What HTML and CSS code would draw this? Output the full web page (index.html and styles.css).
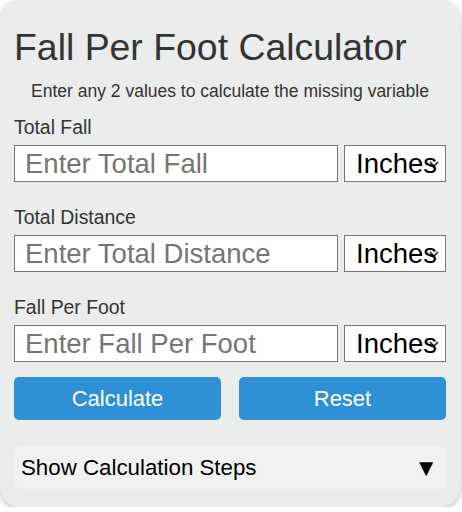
FILE: index.html
```html
<!DOCTYPE html>
<html lang="en">
<head>
    <meta charset="UTF-8">
    <meta name="viewport" content="width=device-width, initial-scale=1.0">
    <title>Fall Per Foot Calculator</title>
    <link rel="stylesheet" href="styles.css">
</head>
<body>

    <div class="calculator">
        <h1>Fall Per Foot Calculator</h1>
        <p class="intro">Enter any 2 values to calculate the missing variable</p>

        <div class="field">
            <label for="totalFall">Total Fall</label>
            <div class="input-row">
                <input type="text" id="totalFall" placeholder="Enter Total Fall">
                <select id="totalFallUnit">
                    <option>Inches</option>
                    <option>Feet</option>
                    <option>Centimeters</option>
                    <option>Meters</option>
                </select>
            </div>
        </div>

        <div class="field">
            <label for="totalDistance">Total Distance</label>
            <div class="input-row">
                <input type="text" id="totalDistance" placeholder="Enter Total Distance">
                <select id="totalDistanceUnit">
                    <option>Inches</option>
                    <option>Feet</option>
                    <option>Centimeters</option>
                    <option>Meters</option>
                </select>
            </div>
        </div>

        <div class="field">
            <label for="fallPerFoot">Fall Per Foot</label>
            <div class="input-row">
                <input type="text" id="fallPerFoot" placeholder="Enter Fall Per Foot">
                <select id="fallPerFootUnit">
                    <option>Inches</option>
                    <option>Centimeters</option>
                </select>
            </div>
        </div>

        <div class="buttons">
            <button type="button">Calculate</button>
            <button type="button">Reset</button>
        </div>

        <details class="steps">
            <summary><span>Show Calculation Steps</span><span class="arrow">&#9660;</span></summary>
            <p>No calculation yet.</p>
        </details>
    </div>

</body>
</html>
```

FILE: styles.css
```css
body {
    margin: 0;
    background-color: #fff;
    font-family: "Liberation Sans", Arial, sans-serif;
    color: #333;
}
.calculator {
    width: 460px;
    box-sizing: border-box;
    padding: 25px 14px 18px;
    background-color: #ebecec;
    border-radius: 20px;
    box-shadow: 0 2px 6px rgba(0, 0, 0, 0.25);
}
h1 {
    margin: 0;
    font-size: 37.4px;
    line-height: 44px;
    font-weight: normal;
    color: #333;
}
.intro {
    margin: 12px 0 0;
    font-size: 17.5px;
    line-height: 20px;
    text-align: center;
}
.field {
    margin-top: 15px;
}
.field + .field {
    margin-top: 24px;
}
label {
    display: block;
    font-size: 19.4px;
    line-height: 22px;
    margin-bottom: 7px;
}
.input-row {
    display: flex;
    gap: 6px;
}
input,
select {
    height: 37px;
    box-sizing: border-box;
    border: 1px solid #767676;
    background-color: #fff;
    font-family: inherit;
    font-size: 27.5px;
    margin: 0;
}
input {
    flex: 1;
    min-width: 0;
    padding: 1px 10px;
    color: #000;
}
input::placeholder {
    color: #757575;
}
select {
    width: 102px;
    padding: 0 0 0 11px;
    border-radius: 0;
    color: #000;
    appearance: none;
    -webkit-appearance: none;
    background-image: url("data:image/svg+xml,%3Csvg xmlns='http://www.w3.org/2000/svg' width='10' height='6' viewBox='0 0 10 6'%3E%3Cpath d='M1 1l4 4 4-4' fill='none' stroke='%23222' stroke-width='1.6'/%3E%3C/svg%3E");
    background-repeat: no-repeat;
    background-position: right 6px center;
}
.buttons {
    display: flex;
    gap: 18px;
    margin-top: 15px;
}
.buttons button {
    flex: 1;
    height: 43px;
    border: none;
    border-radius: 5px;
    background-color: #2e90d6;
    color: #fff;
    font-family: inherit;
    font-size: 22px;
    cursor: pointer;
}
.steps {
    margin-top: 26px;
    background-color: #f1f1f1;
    border-radius: 7px;
}
.steps summary {
    display: flex;
    justify-content: space-between;
    align-items: center;
    height: 43px;
    padding: 0 8px 0 7px;
    list-style: none;
    font-size: 22.3px;
    color: #000;
    cursor: pointer;
}
.steps summary .arrow {
    font-size: 24px;
}
.steps summary::-webkit-details-marker {
    display: none;
}
.steps p {
    margin: 0;
    padding: 0 7px 10px;
}
```
